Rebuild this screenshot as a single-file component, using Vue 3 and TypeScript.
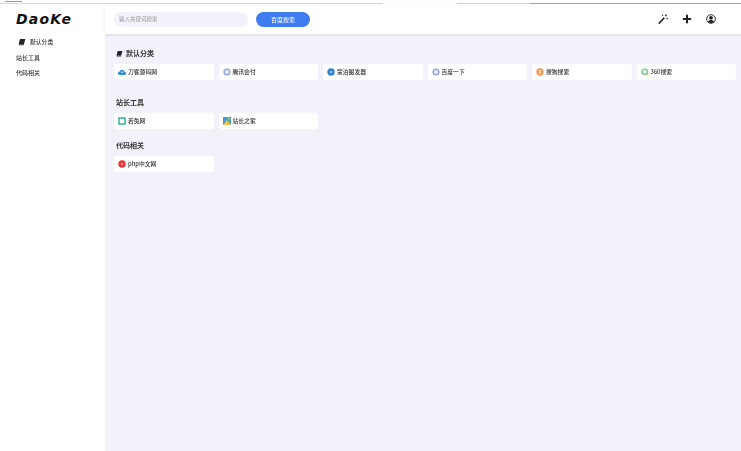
<script setup lang="ts">
interface Site { name: string; icon: string }
interface Section { title: string; book?: boolean; sites: Site[] }

const sections: Section[] = [
  {
    title: '默认分类',
    book: true,
    sites: [
      { name: '刀客源码网', icon: 'cloud' },
      { name: '腾讯会付', icon: 'ring' },
      { name: '蒙泊图发器', icon: 'blue' },
      { name: '百度一下', icon: 'ring' },
      { name: '搜狗搜索', icon: 'sogou' },
      { name: '360搜索', icon: 'q360' },
    ],
  },
  {
    title: '站长工具',
    sites: [
      { name: '若兔网', icon: 'square' },
      { name: '站长之家', icon: 'home' },
    ],
  },
  {
    title: '代码相关',
    sites: [{ name: 'php中文网', icon: 'php' }],
  },
]
const menu = ['站长工具', '代码相关']
</script>

<template>
  <div class="page">
    <div class="strip">
      <i class="seg s1"></i><i class="seg s2"></i><i class="seg s3"></i><i class="seg s4"></i>
    </div>
    <div class="shell">
      <aside class="side">
        <div class="logo">DaoKe</div>
        <nav class="menu">
          <div class="item first">
            <svg class="book" viewBox="0 0 12 12"><path d="M3 1.500h8L9 9H1zM1 9.500h8l-.4 1.500H1.400z" fill="#222" /></svg>
            默认分类
          </div>
          <div v-for="m in menu" :key="m" class="item">{{ m }}</div>
        </nav>
      </aside>
      <div class="right">
        <header class="top">
          <div class="search">输入关键词搜索</div>
          <button class="go">百度搜索</button>
          <div class="tools">
            <svg class="tool" viewBox="0 0 12 12"><path d="M1 11.500 7.500 4.500" stroke="#222" stroke-width="2" /><path d="M9.500 .5v2.400M8.300 1.700h2.400M11 4.500v1.800M10.100 5.400h1.800M5.500 .8v1.400M4.800 1.500h1.400" stroke="#222" stroke-width=".9" /></svg>
            <svg class="tool" viewBox="0 0 12 12"><path d="M6 1v10M1 6h10" stroke="#222" stroke-width="2.400" /></svg>
            <svg class="tool" viewBox="0 0 12 12"><circle cx="6" cy="6" r="5.200" fill="none" stroke="#222" stroke-width="1.100" /><circle cx="6" cy="4.600" r="2.300" fill="#222" /><path d="M2.400 9.400C3 7.800 4.500 7.300 6 7.300s3 .5 3.600 2.100A5 5 0 0 1 2.400 9.400z" fill="#222" /></svg>
          </div>
        </header>
        <main class="main">
          <section v-for="s in sections" :key="s.title" class="sec">
            <h2 class="title">
              <svg v-if="s.book" class="book" viewBox="0 0 12 12"><path d="M3 1.500h8L9 9H1zM1 9.500h8l-.4 1.500H1.400z" fill="#222" /></svg>
              {{ s.title }}
            </h2>
            <div class="grid">
              <a v-for="c in s.sites" :key="c.name" class="card">
                <svg class="ico" viewBox="0 0 12 12">
                  <template v-if="c.icon === 'cloud'">
                    <path d="M2.800 10.500A2.600 2.600 0 0 1 2.400 5.300 3.800 3.800 0 0 1 9.600 5.300 2.600 2.600 0 0 1 9.200 10.500z" fill="#2f8fd0" />
                    <path d="M6 4.500 8 7H4z" fill="#cfe6f6" />
                  </template>
                  <template v-else-if="c.icon === 'ring'">
                    <circle cx="6" cy="6" r="4.400" fill="#dfe5f4" stroke="#8fa3d8" stroke-width="2" />
                  </template>
                  <template v-else-if="c.icon === 'blue'">
                    <circle cx="6" cy="6" r="5.500" fill="#2f7fd6" /><circle cx="6" cy="6" r="2" fill="#8cc0f0" />
                  </template>
                  <template v-else-if="c.icon === 'sogou'">
                    <circle cx="6" cy="6" r="5.500" fill="#f39a55" /><path d="M8 4 4.500 4.500 7.500 7.500 4 8" fill="none" stroke="#fff" stroke-width="1.200" />
                  </template>
                  <template v-else-if="c.icon === 'q360'">
                    <circle cx="5.500" cy="5.500" r="4" fill="#fff" stroke="#49b86e" stroke-width="1.600" /><path d="M8.500 8.500 11 11" stroke="#e3b23c" stroke-width="1.600" />
                  </template>
                  <template v-else-if="c.icon === 'square'">
                    <rect x="1.500" y="1.500" width="9" height="9" fill="#fff" stroke="#1fa58c" stroke-width="2" />
                  </template>
                  <template v-else-if="c.icon === 'home'">
                    <rect x="0" y="0" width="12" height="12" fill="#3f9ae0" /><path d="M0 12 6 4l6 8z" fill="#f0c040" /><rect x="7" y="1" width="4" height="4" fill="#7fc65a" />
                  </template>
                  <template v-else>
                    <circle cx="6" cy="6" r="5.500" fill="#e5343c" /><circle cx="6" cy="6" r="2" fill="#f48a8c" />
                  </template>
                </svg>
                <span>{{ c.name }}</span>
              </a>
            </div>
          </section>
        </main>
      </div>
    </div>
  </div>
</template>

<style>
html, body { margin: 0; background: #fff; }
</style>

<style scoped>
.page {
  width: 741px;
  height: 451px;
  overflow: hidden;
  display: flex;
  flex-direction: column;
  font-family: "Noto Sans CJK SC", "Noto Sans", sans-serif;
  font-weight: 500;
  color: #333;
  filter: blur(.4px);
}
.strip {
  height: 4px;
  flex: none;
  display: flex;
  align-items: flex-end;
  background: linear-gradient(#999, #999) 5px 1px / 17px 1px no-repeat;
}
.seg { display: block; height: 1px; }
.s1 { width: 383px; background: #d8d8d8; }
.s2 { width: 74px; background: transparent; }
.s3 { width: 73px; background: #d4d4d4; }
.s4 { flex: 1; background: #a8a8a8; }
.shell { flex: 1; display: flex; min-height: 0; }
.side { width: 105px; flex: none; background: #fff; }
.logo {
  margin: 7px 0 0 16px;
  height: 16px;
  font: italic 700 14px/16px "DejaVu Sans", sans-serif;
  letter-spacing: 1.200px;
  color: #111;
}
.menu { margin-top: 11px; display: flex; flex-direction: column; gap: 7.500px; }
.item { height: 8px; line-height: 8px; font-size: 6px; padding-left: 16px; display: flex; align-items: center; white-space: nowrap; }
.item.first { padding-left: 18px; font-size: 5.800px; }
.item.first .book { margin-right: 4px; }
.book { width: 8px; height: 8px; flex: none; }
.right { flex: 1; min-width: 0; display: flex; flex-direction: column; }
.top {
  height: 30px;
  flex: none;
  background: #fff;
  display: flex;
  align-items: center;
  padding: 0 9px;
  box-shadow: 0 1px 3px rgba(0, 0, 0, .1);
  position: relative;
}
.search {
  width: 129px;
  height: 15px;
  line-height: 15px;
  border-radius: 8px;
  background: #f1f2fa;
  padding-left: 5px;
  font-size: 5.500px;
  font-weight: 400;
  color: #999;
}
.go {
  margin-left: 8px;
  width: 54px;
  height: 15px;
  border: 0;
  padding: 0;
  border-radius: 8px;
  background: #3f7cf0;
  color: #fff;
  font: 6px "Noto Sans CJK SC", sans-serif;
}
.tools { margin-left: auto; margin-right: 16.500px; display: flex; gap: 14px; }
.tool { width: 10px; height: 10px; display: block; }
.main { flex: 1; background: #f1f2fa; padding: 14.500px 5px 0 9px; }
.sec { margin-bottom: 17.500px; }
.sec + .sec { margin-bottom: 11.500px; }
.title {
  margin: 0 0 6px;
  height: 9px;
  line-height: 9px;
  font-size: 7px;
  font-weight: 700;
  display: flex;
  align-items: center;
  gap: 3px;
  padding-left: 2px;
}
.title .book { width: 7px; height: 7px; }
.grid { display: grid; grid-template-columns: repeat(6, 1fr); gap: 5px; }
.card {
  height: 16.500px;
  background: #fff;
  border-radius: 3px;
  display: flex;
  align-items: center;
  padding-left: 4px;
  gap: 2px;
  font-size: 5.800px;
  white-space: nowrap;
}
.ico { width: 8px; height: 8px; flex: none; }
</style>
